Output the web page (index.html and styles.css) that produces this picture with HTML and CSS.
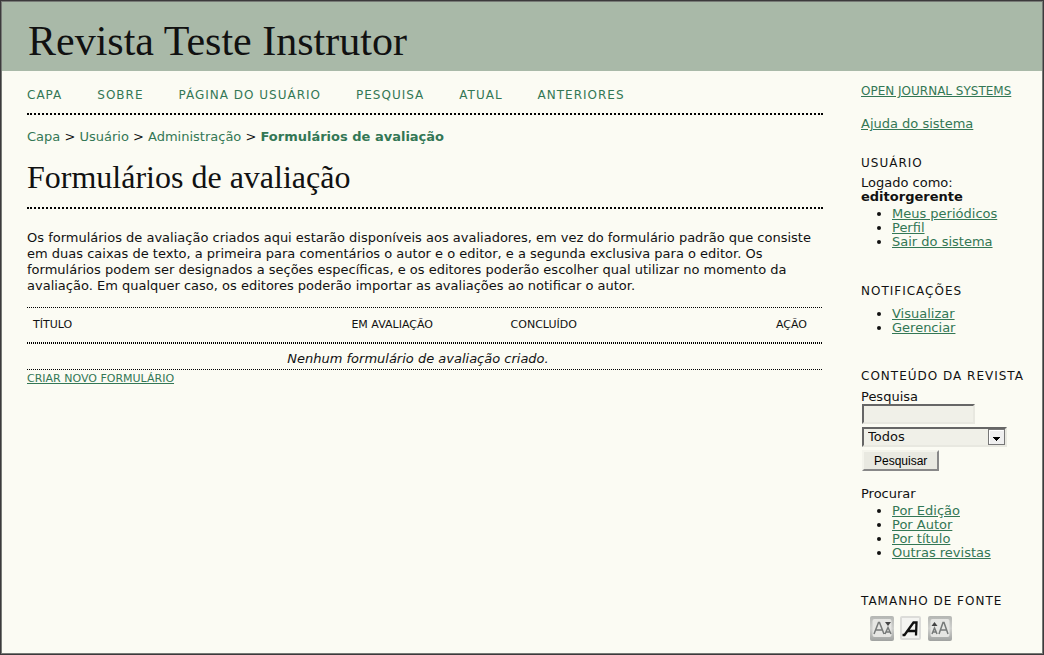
FILE: index.html
```html
<!DOCTYPE html>
<html lang="pt-BR">
<head>
<meta charset="utf-8">
<meta name="viewport" content="width=device-width, initial-scale=1">
<title>Formulários de avaliação</title>
<link rel="stylesheet" href="styles.css">
</head>
<body>
<div class="page">
  <header class="header"><h1>Revista Teste Instrutor</h1></header>
  <div class="body">
    <main class="main">
      <nav class="navbar" aria-label="Principal">
        <a href="#">CAPA</a>
        <a href="#">SOBRE</a>
        <a href="#">PÁGINA DO USUÁRIO</a>
        <a href="#">PESQUISA</a>
        <a href="#">ATUAL</a>
        <a href="#">ANTERIORES</a>
      </nav>
      <nav class="breadcrumb" aria-label="Trilha">
        <a href="#">Capa</a> &gt; <a href="#">Usuário</a> &gt; <a href="#">Administração</a> &gt; <a href="#" class="current">Formulários de avaliação</a>
      </nav>
      <h2 class="title">Formulários de avaliação</h2>
      <p class="intro">Os formulários de avaliação criados aqui estarão disponíveis aos avaliadores, em vez do formulário padrão que consiste em duas caixas de texto, a primeira para comentários o autor e o editor, e a segunda exclusiva para o editor. Os formulários podem ser designados a seções específicas, e os editores poderão escolher qual utilizar no momento da avaliação. Em qualquer caso, os editores poderão importar as avaliações ao notificar o autor.</p>
      <table class="listing">
        <thead>
          <tr>
            <th class="col-title">TÍTULO</th>
            <th class="col-review">EM AVALIAÇÃO</th>
            <th class="col-done">CONCLUÍDO</th>
            <th class="col-action">AÇÃO</th>
          </tr>
        </thead>
        <tbody>
          <tr><td colspan="4" class="nodata">Nenhum formulário de avaliação criado.</td></tr>
        </tbody>
      </table>
      <a href="#" class="action">CRIAR NOVO FORMULÁRIO</a>
    </main>
    <aside class="sidebar">
      <section class="block"><a href="#" class="small">OPEN JOURNAL SYSTEMS</a></section>
      <section class="block help"><a href="#">Ajuda do sistema</a></section>
      <section class="block user">
        <h3>USUÁRIO</h3>
        <div>Logado como:<br><strong>editorgerente</strong></div>
        <ul>
          <li><a href="#">Meus periódicos</a></li>
          <li><a href="#">Perfil</a></li>
          <li><a href="#">Sair do sistema</a></li>
        </ul>
      </section>
      <section class="block notes">
        <h3>NOTIFICAÇÕES</h3>
        <ul>
          <li><a href="#">Visualizar</a></li>
          <li><a href="#">Gerenciar</a></li>
        </ul>
      </section>
      <section class="block content">
        <h3>CONTEÚDO DA REVISTA</h3>
        <form class="search">
          <label for="query">Pesquisa</label>
          <input type="text" id="query" class="field">
          <span class="select-wrap">
            <select class="field" aria-label="Campo da pesquisa"><option>Todos</option></select>
            <svg class="arrow" viewBox="0 0 17 16" aria-hidden="true"><rect x="0.5" y="0.5" width="16" height="15" fill="#efefef" stroke="#777"/><path d="M1.500 14.500v-13h14" fill="none" stroke="#fff"/><path d="M5 8h7v1h-1v1h-1v1H9v1H8v-1H7v-1H6V9H5z" fill="#000"/></svg>
          </span>
          <button type="button">Pesquisar</button>
        </form>
        <div>Procurar</div>
        <ul>
          <li><a href="#">Por Edição</a></li>
          <li><a href="#">Por Autor</a></li>
          <li><a href="#">Por título</a></li>
          <li><a href="#">Outras revistas</a></li>
        </ul>
      </section>
      <section class="block fonts">
        <h3>TAMANHO DE FONTE</h3>
        <div class="sizes">
          <button type="button" class="size" aria-label="Diminuir fonte"><svg viewBox="0 0 24 25"><defs><linearGradient id="key" x1="0" y1="0" x2="0" y2="1"><stop offset="0" stop-color="#b4b6b3"/><stop offset="0.5" stop-color="#d0d1ce"/><stop offset="1" stop-color="#a0a2a0"/></linearGradient></defs><rect width="24" height="25" rx="2" fill="url(#key)"/><rect x="2.500" y="3" width="19" height="18" rx="2" fill="#e6e6e3"/><path d="M4 18L8.500 6.500h1L14 18M6 14h6M15 18l3-6.500L21 18M16 16h4" fill="none" stroke="#777a79" stroke-width="1.500"/><path d="M15 6h6l-3 4z" fill="#444"/></svg></button>
          <button type="button" class="size" aria-label="Fonte padrão"><svg viewBox="0 0 24 25"><rect x="2" y="1" width="19" height="22" rx="1" fill="#f4f4f1" stroke="#dcdcd9" stroke-width="2"/><path d="M3.500 19h2L14.500 6.500h3L17 19.500M8.500 15h8.500" fill="none" stroke="#111" stroke-width="2.300"/></svg></button>
          <button type="button" class="size" aria-label="Aumentar fonte"><svg viewBox="0 0 24 25"><rect width="24" height="25" rx="2" fill="url(#key)"/><rect x="2.500" y="3" width="19" height="18" rx="2" fill="#e6e6e3"/><path d="M11 18l4-11.500h1L20 18M12.500 14h6M4 18l2.500-6L9 18M5 16h3" fill="none" stroke="#777a79" stroke-width="1.500"/><path d="M3.500 10h6l-3-4z" fill="#444"/></svg></button>
        </div>
      </section>
    </aside>
  </div>
</div>
</body>
</html>
```
FILE: styles.css
```css
* { box-sizing: border-box; }

body {
  margin: 0;
  background: #fbfbf3;
  color: #111;
  font: 13px/16px Verdana, "DejaVu Sans", sans-serif;
}

.page {
  min-height: 100vh;
  border: 1px solid #3c3a3c;
  box-shadow: inset 0 0 0 1px #777a76;
}

a { color: #337755; }

h1, h2, h3, p, ul { margin: 0; font-weight: normal; }

.header {
  margin: 1px 1px 0;
  padding: 15px 26px 6px;
  background: #a9b9a8;
}

h1 {
  font: 42px/48px Georgia, "Liberation Serif", serif;
}

.body {
  display: grid;
  grid-template-columns: minmax(0, 1fr) 182px;
  column-gap: 38px;
  padding-left: 26px;
}

.navbar {
  display: flex;
  flex-wrap: wrap;
  gap: 4px 35px;
  padding: 16px 0 10px;
  border-bottom: 2px dotted #000;
  font-size: 12px;
  letter-spacing: 1px;
}

.navbar a, .breadcrumb a { text-decoration: none; }

.breadcrumb { padding-top: 14px; }

.breadcrumb .current { font-weight: bold; }

.title {
  padding: 14px 0 12px;
  border-bottom: 2px dotted #000;
  font: 32px/36px Georgia, "Liberation Serif", serif;
}

.intro { padding: 21px 0 13px; }

.listing {
  --dots: repeating-linear-gradient(90deg, #000 0 1px, transparent 1px 2px);
  width: 100%;
  border-spacing: 0;
  background: var(--dots) 0 0 / 100% 1px no-repeat, var(--dots) 0 100% / 100% 1px no-repeat;
  table-layout: fixed;
}

thead { background: var(--dots) 0 100% / 100% 2px no-repeat; }

th {
  padding: 10px 0 11px;
  font-size: 11px;
  font-weight: normal;
  text-align: left;
}

.col-title { width: 40%; padding-left: 6px; }
.col-review, .col-done { width: 20%; padding-left: 6px; }
.col-action { width: 20%; padding-right: 16px; text-align: right; }

.nodata {
  padding: 7px 14px 3px 0;
  font-style: italic;
  text-align: center;
}

.action { font-size: 11px; }

.sidebar {
  padding-top: 13px;
  line-height: 14px;
}

.small { font-size: 12px; }

.help { padding-top: 19px; }
.user { padding-top: 25px; }
.notes { padding-top: 35px; }
.content, .fonts { padding-top: 34px; }

h3 {
  margin-bottom: 6px;
  font-size: 12px;
  line-height: 14px;
  letter-spacing: 1px;
  white-space: nowrap;
}

.sidebar ul { padding: 3px 0 0 31px; }

.search {
  display: flex;
  flex-direction: column;
  align-items: flex-start;
  gap: 3px;
  padding: 1px 0 16px 1px;
}

.search label { margin: 0 0 -3px -1px; }

.field {
  width: 113px;
  height: 20px;
  padding: 0 4px;
  border: 2px solid #e8e8e0;
  border-top-color: #666;
  border-left-color: #666;
  border-radius: 0;
  background: #f0f0e8;
  color: #111;
  font: inherit;
  appearance: none;
}

.select-wrap { position: relative; }
.select-wrap .field { display: block; width: 145px; }

.arrow {
  position: absolute;
  top: 2px;
  right: 2px;
  width: 17px;
  height: 16px;
  pointer-events: none;
}

.search button {
  padding: 2px 10px 0;
  border: 2px solid #888;
  border-top-color: #f4f4ec;
  border-left-color: #f4f4ec;
  background: #e9e9e1;
  color: #000;
  font: 12px/15px Arial, "Liberation Sans", sans-serif;
}

.sizes { display: flex; gap: 5px; padding: 2px 0 0 9px; }

.size {
  width: 24px;
  height: 25px;
  padding: 0;
  border: 0;
  background: none;
}

.size svg { display: block; }
```
